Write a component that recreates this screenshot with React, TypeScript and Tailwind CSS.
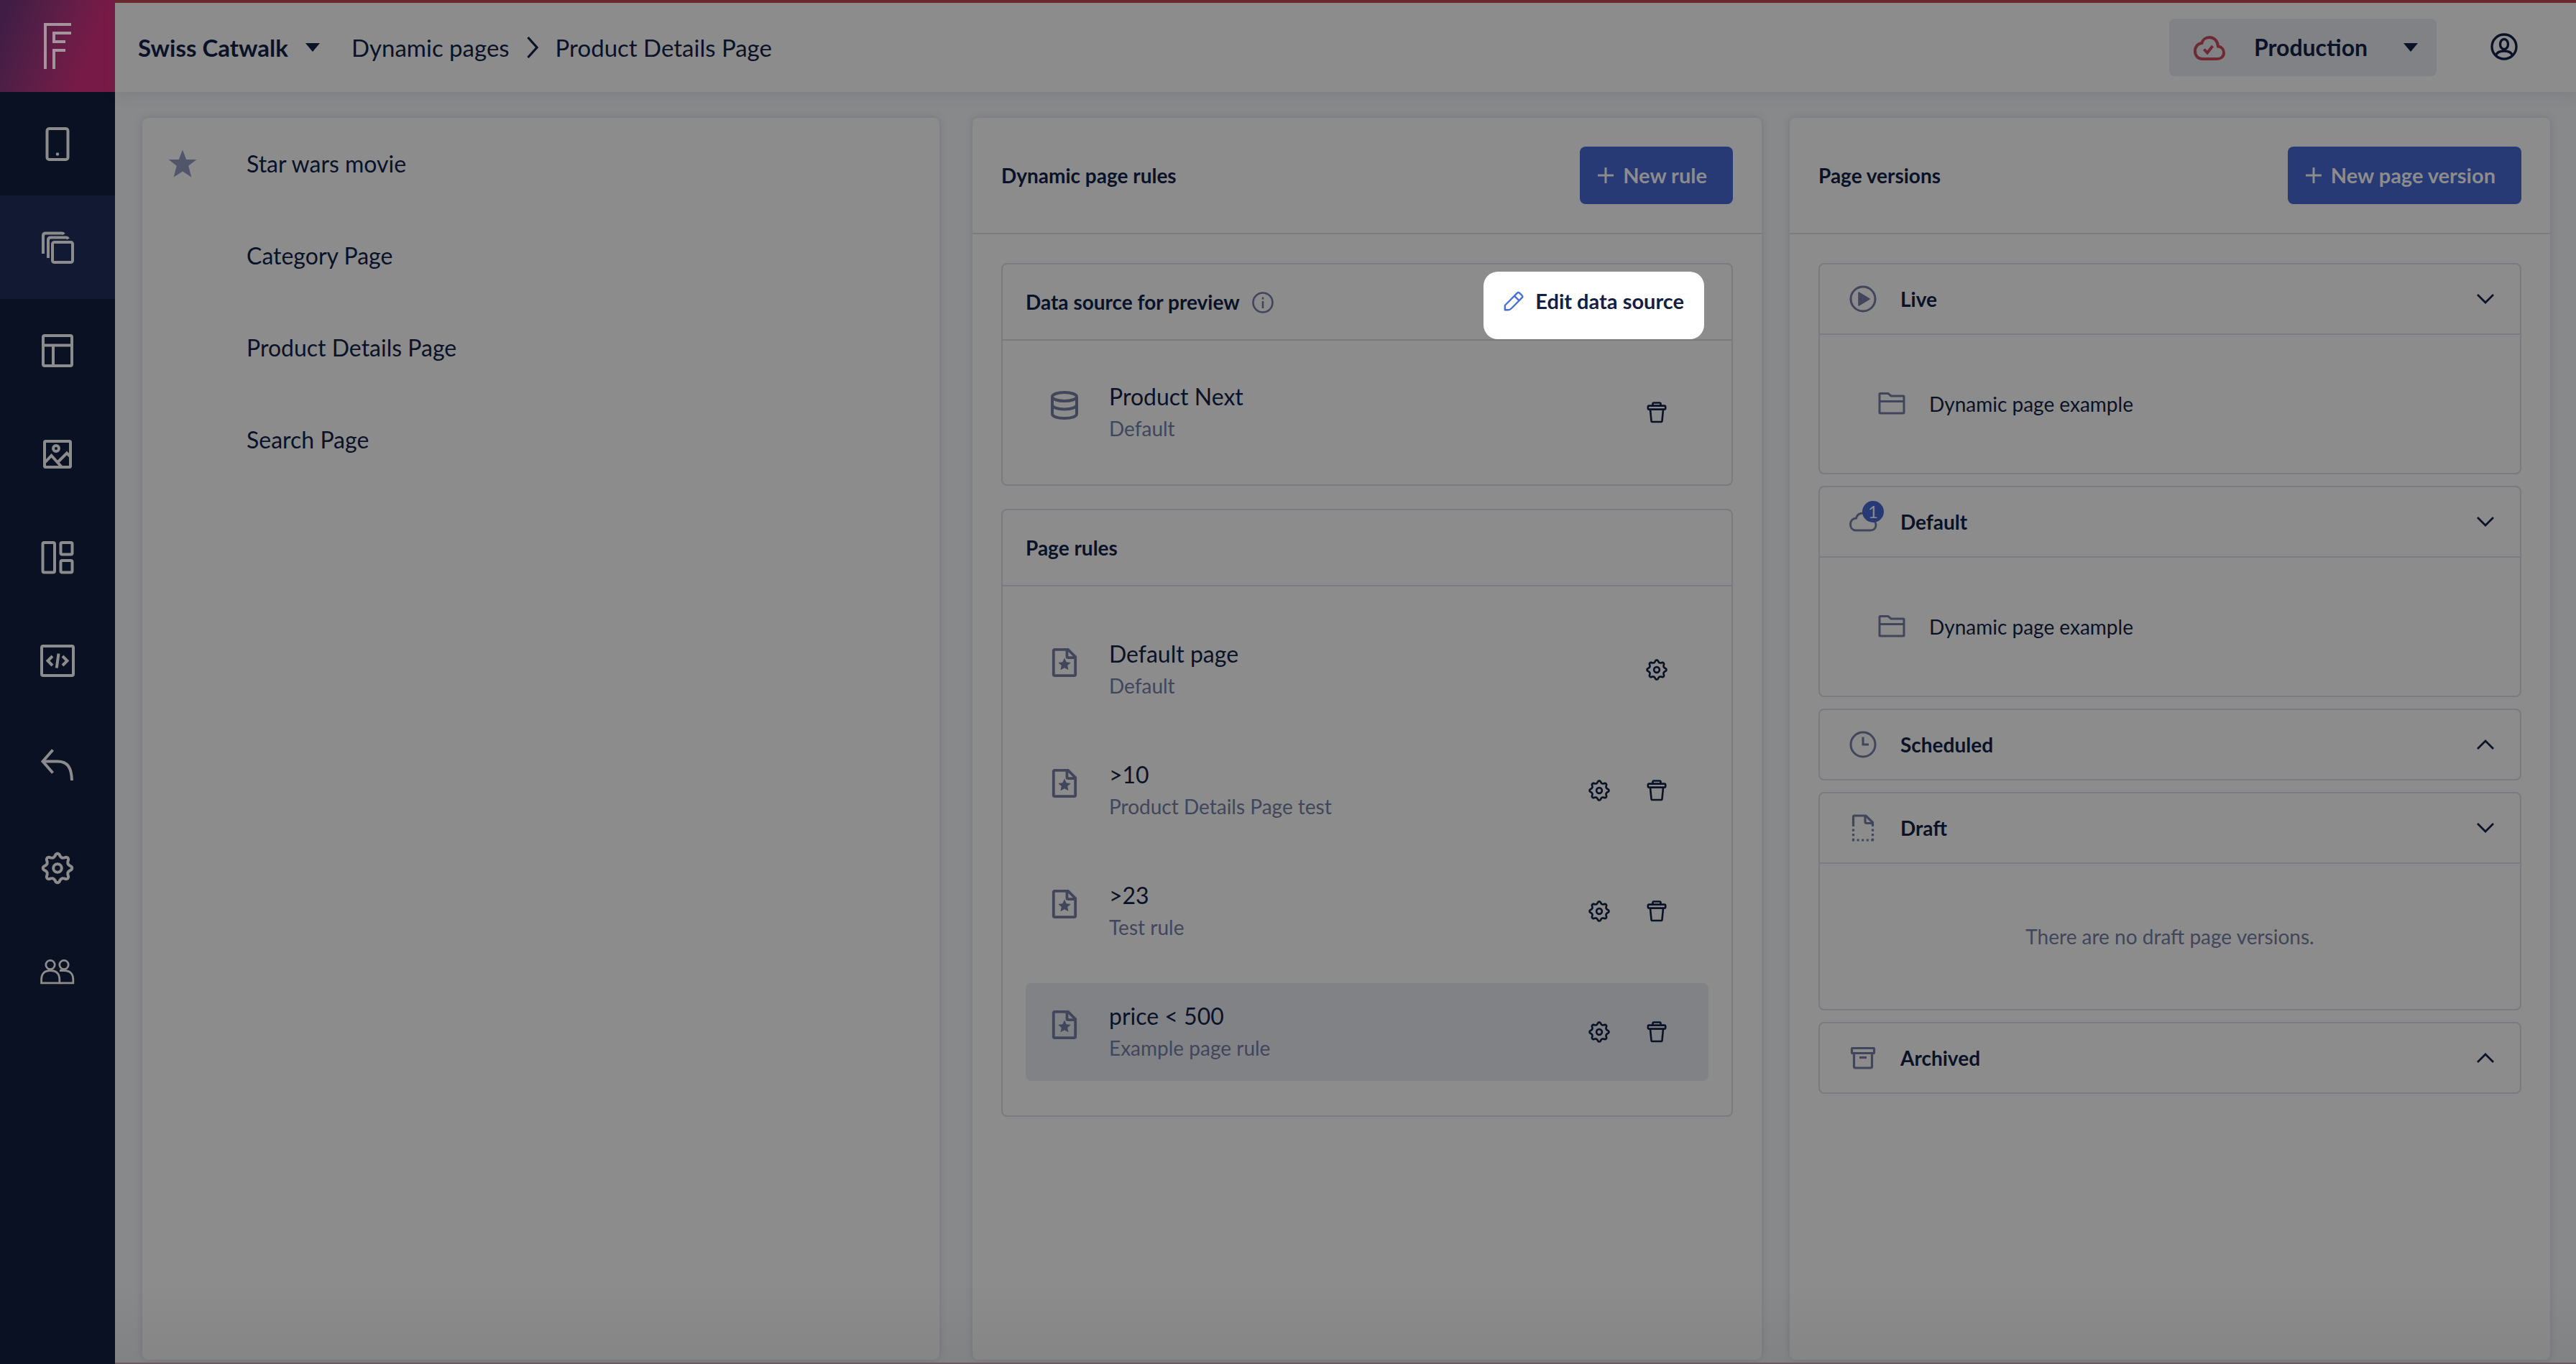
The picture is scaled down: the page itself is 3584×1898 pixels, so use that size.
import React from "react";

type IconProps = {
  className?: string;
};

type Rule = {
  title: string;
  subtitle: string;
  deletable: boolean;
  active?: boolean;
};

type Version = {
  title: string;
  icon: React.ReactNode;
  open: boolean;
  page?: string;
  empty?: string;
};

// eight rounded teeth around the centre of a 48 x 48 box
const gearPath =
  "M" +
  Array.from({ length: 128 }, (_, i) => {
    const angle = (i / 128) * Math.PI * 2;
    const wave = Math.cos(8 * angle);
    const radius = 17.4 + 2.8 * (wave > 0 ? Math.pow(wave, 0.7) : wave * 0.6);
    return `${(24 + radius * Math.cos(angle)).toFixed(2)} ${(24 + radius * Math.sin(angle)).toFixed(2)}`;
  }).join("L") +
  "Z";

const Svg = ({
  className = "size-12",
  box = 48,
  width = 4,
  children,
}: {
  className?: string;
  box?: number;
  width?: number;
  children: React.ReactNode;
}) => (
  <svg
    className={`${className} shrink-0`}
    viewBox={`0 0 ${box} ${box}`}
    fill="none"
    stroke="currentColor"
    strokeWidth={width}
    aria-hidden="true"
  >
    {children}
  </svg>
);

const Logo = () => (
  <svg className="w-10 h-16" viewBox="0 0 40 64" fill="none" stroke="#a5929d" strokeWidth="4" aria-hidden="true">
    <path d="M3 64V2H39" />
    <path d="M39 14H15V26H31" />
    <path d="M31 38H15V64" />
  </svg>
);

const PhoneIcon = () => (
  <Svg>
    <rect x="9.5" y="3" width="29" height="43" rx="3" />
    <circle cx="24" cy="38.5" r="2.2" fill="currentColor" stroke="none" />
  </Svg>
);

const PagesIcon = () => (
  <Svg>
    <rect x="17" y="17" width="28" height="28" rx="2.5" />
    <path d="M11 39V14Q11 10.500 14.500 10.500H36Q38 10.500 39 12.500" />
    <path d="M4 33V8Q4 4.500 7.500 4.500H30Q32 4.500 33 6" />
  </Svg>
);

const LayoutIcon = () => (
  <Svg>
    <rect x="4" y="3" width="40" height="42" rx="2" />
    <path d="M4 16.500H44M18 16.500V45" />
  </Svg>
);

const ImageIcon = () => (
  <Svg>
    <rect x="6" y="6" width="36" height="36" rx="1.5" />
    <circle cx="22" cy="16" r="4" />
    <path d="M7 35L15.5 26L30 42M24 35.500L37 22.500L42 27.500" />
  </Svg>
);

const WidgetsIcon = () => (
  <Svg>
    <rect x="3.5" y="3" width="16.5" height="41.5" rx="2" />
    <rect x="28.5" y="3" width="16" height="16.5" rx="2" />
    <rect x="28.5" y="28" width="16" height="16.5" rx="2" />
  </Svg>
);

const CodeIcon = () => (
  <Svg>
    <rect x="2" y="3" width="44" height="41" rx="2" />
    <path d="M17 17L10.500 23.500L17 30M31 17L37.500 23.500L31 30M25.500 13.500L22.800 33.500" />
  </Svg>
);

const BackIcon = () => (
  <Svg>
    <path d="M17.5 3.5L3.5 19.5L17.5 35.5" />
    <path d="M4 19.500H24C38 19.500 43.500 28 44 46" />
  </Svg>
);

const GearIcon = ({ className = "size-12" }: IconProps) => (
  <Svg className={className}>
    <path d={gearPath} strokeLinejoin="round" />
    <circle cx="24" cy="24" r="5.8" />
  </Svg>
);

const PeopleIcon = () => (
  <Svg width={2.8}>
    <circle cx="14" cy="14.5" r="6.2" />
    <circle cx="33" cy="14.5" r="6.2" />
    <path d="M1.6 39.800V35C1.600 27 6 22.500 14.200 22.500S26.800 27 26.800 35V39.800Z" />
    <path d="M27 22.500H33C41 22.500 45.800 27 45.800 35V39.800H26.800" />
  </Svg>
);

const Caret = () => (
  <svg className="w-5 h-3 shrink-0 pointer-events-none" viewBox="0 0 20 12" aria-hidden="true">
    <path d="M0 0H20L10 12Z" fill="currentColor" />
  </svg>
);

const CloudCheckIcon = () => (
  <svg className="w-11 h-9 shrink-0" viewBox="0 0 44 36" fill="none" stroke="#6e2932" strokeWidth="4" aria-hidden="true">
    <path d="M12 34H33C38 34 42 30.500 42 25.500C42 20.500 38.500 17 34 16.500C33.500 9 28.500 4 22 4C16.500 4 12.500 7.500 11.500 12C6 12.500 2 17 2 23C2 29.500 6 34 12 34Z" />
    <path d="M14.500 20.500L19 25.500L26.500 16" />
  </svg>
);

const UserIcon = () => (
  <Svg className="size-10" box={40} width={3.4}>
    <circle cx="20" cy="19" r="17" />
    <ellipse cx="20" cy="15.500" rx="5.500" ry="7" />
    <path d="M8.500 31C10 26.500 14.500 25 20 25S30 26.500 31.500 31" />
  </Svg>
);

const PlusIcon = () => (
  <Svg className="size-6" box={24} width={3}>
    <path d="M12 1V23M1 12H23" />
  </Svg>
);

const InfoIcon = () => (
  <Svg className="size-8 text-[#41465a]" box={32} width={2.6}>
    <circle cx="16" cy="17" r="13.500" />
    <path d="M16 15V25M16 9.500V12.500" />
  </Svg>
);

const PencilIcon = () => (
  <Svg className="size-7 text-[#4a6fdc]" box={28} width={2.4}>
    <path d="M1.800 26.200V20L19 2.600Q20.500 1.200 22 2.600L25.600 6.200Q27 7.700 25.600 9.200L10.500 24.500Q8.800 26.200 6.500 26.200Z" strokeLinejoin="round" />
    <path d="M15 6.800L21.500 13.200" />
  </Svg>
);

const TrashIcon = () => (
  <Svg className="size-8" box={32} width={2.6}>
    <path d="M10.500 6V4Q10.500 2.500 12 2.500H20Q21.500 2.500 21.500 4V6" />
    <rect x="3.800" y="6.600" width="24.400" height="5" rx="1.600" />
    <path d="M7 12L8.500 27.500Q8.700 29 10.200 29H21.800Q23.300 29 23.500 27.500L25 12" />
  </Svg>
);

const DatabaseIcon = () => (
  <Svg className="size-10" box={40} width={4}>
    <ellipse cx="20" cy="8" rx="17" ry="6" />
    <path d="M3 8V32C3 35.500 10 38 20 38S37 35.500 37 32V8" />
    <path d="M3 19C3 22.600 10 25.600 20 25.600S37 22.600 37 19" />
  </Svg>
);

const RuleIcon = () => (
  <Svg className="size-10" box={40} width={3.8}>
    <path d="M6.500 1.900H25L35.200 12V36.200Q35.200 38.100 33.500 38.100H6.500Q4.800 38.100 4.800 36.200V3.500Q4.800 1.900 6.500 1.900Z" />
    <path d="M23.500 2V11.500Q23.500 13.200 25.200 13.200H35" />
    <path
      d="M20 13.500L22.600 19.200L28.800 19.900L24.200 24.100L25.500 30.300L20 27.200L14.500 30.300L15.800 24.100L11.200 19.900L17.400 19.200Z"
      fill="currentColor"
      stroke="none"
    />
  </Svg>
);

const LiveIcon = () => (
  <Svg className="size-10" box={40} width={3}>
    <circle cx="20" cy="20" r="17" />
    <path d="M14 11L29 20L14 29Z" fill="currentColor" stroke="currentColor" strokeWidth="1.500" strokeLinejoin="round" />
  </Svg>
);

const DefaultIcon = () => (
  <div className="relative size-10 shrink-0">
    <Svg className="size-10" box={40} width={3}>
      <path d="M10 32H30C35 32 38 29 38 24.500C38 20 34.500 17.500 31 17C30 11.500 26 8 20.500 8C15 8 11.500 11 10.500 15C5.500 15.500 2.500 19 2.500 23.500C2.500 28.500 5.500 32 10 32Z" />
    </Svg>
    <span className="absolute left-[19px] -top-[9px] flex size-[30px] items-center justify-center rounded-full bg-[#273a75] text-2xl leading-none text-[#8c8c8c]">
      1
    </span>
  </div>
);

const ClockIcon = () => (
  <Svg className="size-10" box={40} width={3}>
    <circle cx="20" cy="20" r="17" />
    <path d="M20 9.500V20H28" />
  </Svg>
);

const DraftIcon = () => (
  <Svg className="size-10" box={40} width={3.2}>
    <path d="M6.500 18V4.500Q6.500 3 8 3H24L33.500 12.500V18" />
    <path d="M23 3V11.500Q23 13.500 25 13.500H33" />
    <path d="M6.500 21.500V38M33.500 21.500V38" strokeDasharray="3.200 3.400" />
    <path d="M5 37H35" strokeDasharray="3 3.600" />
  </Svg>
);

const ArchiveIcon = () => (
  <Svg className="size-10" box={40} width={3.2}>
    <rect x="4.500" y="6.500" width="31" height="7" rx="1" />
    <path d="M7.500 14V32Q7.500 34 9.500 34H30.500Q32.500 34 32.500 32V14" />
    <path d="M15 19.500H25" />
  </Svg>
);

const FolderIcon = () => (
  <Svg className="size-10" box={40} width={3}>
    <path d="M3 32V6.500Q3 5.500 4 5.500H15L19 9H36Q37 9 37 10V32Q37 33 36 33H4Q3 33 3 32Z" />
    <path d="M3 16.500H37" />
  </Svg>
);

const Chevron = ({ up = false }: { up?: boolean }) => (
  <Svg className="size-6" box={24} width={2.8}>
    <path d={up ? "M1 18L12 7L23 18" : "M1 6L12 17L23 6"} />
  </Svg>
);

const navItems = [
  { label: "Devices", icon: <PhoneIcon /> },
  { label: "Pages", icon: <PagesIcon />, active: true },
  { label: "Layouts", icon: <LayoutIcon /> },
  { label: "Media", icon: <ImageIcon /> },
  { label: "Components", icon: <WidgetsIcon /> },
  { label: "Developer", icon: <CodeIcon /> },
  { label: "Redirects", icon: <BackIcon /> },
  { label: "Settings", icon: <GearIcon /> },
  { label: "Users", icon: <PeopleIcon /> },
];

const pages = ["Star wars movie", "Category Page", "Product Details Page", "Search Page"];

const rules: Rule[] = [
  { title: "Default page", subtitle: "Default", deletable: false },
  { title: ">10", subtitle: "Product Details Page test", deletable: true },
  { title: ">23", subtitle: "Test rule", deletable: true },
  { title: "price < 500", subtitle: "Example page rule", deletable: true, active: true },
];

const versions: Version[] = [
  { title: "Live", icon: <LiveIcon />, open: true, page: "Dynamic page example" },
  { title: "Default", icon: <DefaultIcon />, open: true, page: "Dynamic page example" },
  { title: "Scheduled", icon: <ClockIcon />, open: false },
  { title: "Draft", icon: <DraftIcon />, open: true, empty: "There are no draft page versions." },
  { title: "Archived", icon: <ArchiveIcon />, open: false },
];

const Sidebar = () => (
  <aside className="w-40 shrink-0 bg-[#0a1122] text-[#8c8c8c]">
    <a
      href="#home"
      aria-label="Home"
      className="flex h-32 items-center justify-center bg-linear-110 from-[#3f1d45] from-5% to-[#781a47] to-75%"
    >
      <Logo />
    </a>
    <nav>
      {navItems.map((item) => (
        <a
          key={item.label}
          href={`#${item.label.toLowerCase()}`}
          aria-label={item.label}
          className={`flex h-36 items-center justify-center ${item.active ? "bg-[#121a33]" : ""}`}
        >
          {item.icon}
        </a>
      ))}
    </nav>
  </aside>
);

const Header = () => (
  <header className="flex h-32 items-center border-t-4 border-[#6b2831] bg-[#8c8c8c] pl-8 pr-20 text-[33px] leading-10 shadow-[0_4px_16px_rgba(60,64,74,0.15)]">
    <label className="flex items-center gap-6">
      <select aria-label="Project" className="appearance-none bg-transparent font-bold">
        <option>Swiss Catwalk</option>
      </select>
      <Caret />
    </label>
    <nav className="ml-11 flex items-center gap-6">
      <a href="#dynamic">Dynamic pages</a>
      <svg className="w-4 h-8" viewBox="0 0 16 32" fill="none" stroke="currentColor" strokeWidth="3.200" aria-hidden="true">
        <path d="M1.500 2L14 16L1.500 30" />
      </svg>
      <a href="#details">Product Details Page</a>
    </nav>
    <label className="ml-auto flex h-20 w-[372px] items-center rounded-lg bg-[#818286] pl-[34px] pr-[26px] text-[32px]">
      <CloudCheckIcon />
      <select aria-label="Environment" className="ml-10 flex-1 appearance-none bg-transparent font-bold">
        <option>Production</option>
      </select>
      <Caret />
    </label>
    <button aria-label="Account" className="ml-[74px]">
      <UserIcon />
    </button>
  </header>
);

const Card = ({ className = "", children }: { className?: string; children: React.ReactNode }) => (
  <section className={`rounded-lg bg-[#8c8c8c] shadow-[0_0_10px_rgba(70,76,98,0.3)] ${className}`}>{children}</section>
);

const CardHeader = ({ title, action }: { title: string; action: string }) => (
  <div className="flex h-[162px] items-center justify-between border-b-2 border-[#7c7c7d] px-10">
    <h2 className="font-bold">{title}</h2>
    <button className="flex h-20 items-center gap-3 rounded-lg bg-[#273a75] pl-6 pr-9 text-[29px] font-bold text-[#8c8c8c]">
      <PlusIcon />
      {action}
    </button>
  </div>
);

const RuleRow = ({ rule, icon, configurable = true }: { rule: Rule; icon: React.ReactNode; configurable?: boolean }) => (
  <li className={`flex h-[136px] items-center rounded-lg pl-[34px] pr-14 ${rule.active ? "bg-[#818286]" : ""}`}>
    <div className="mb-5 text-[#41465a]">{icon}</div>
    <div className="ml-[42px] flex-1 leading-11">
      <p className="text-[32px] leading-11">{rule.title}</p>
      <p className="text-[#41465a]">{rule.subtitle}</p>
    </div>
    <div className="flex gap-12">
      {configurable && (
        <button aria-label={`Configure ${rule.title}`}>
          <GearIcon className="size-8" />
        </button>
      )}
      {rule.deletable && (
        <button aria-label={`Delete ${rule.title}`}>
          <TrashIcon />
        </button>
      )}
    </div>
  </li>
);

const VersionPanel = ({ version }: { version: Version }) => (
  <div className="rounded-lg border-2 border-[#7a7a80]">
    <button className="flex h-24 w-full items-center pl-10 pr-9 text-left" aria-expanded={version.open}>
      <span className="text-[#41465a]">{version.icon}</span>
      <span className="ml-8 flex-1 font-bold">{version.title}</span>
      <Chevron up={!version.open} />
    </button>
    {version.page && (
      <a href="#version" className="flex h-[194px] items-center gap-8 border-t-2 border-[#7a7a80] pl-20">
        <span className="text-[#41465a]">
          <FolderIcon />
        </span>
        {version.page}
      </a>
    )}
    {version.empty && (
      <p className="flex h-[204px] items-center justify-center border-t-2 border-[#7a7a80] text-[#41465a]">
        {version.empty}
      </p>
    )}
  </div>
);

const PageList = () => (
  <Card className="flex-[1109]">
    <ul className="text-[32px]">
      {pages.map((page, i) => (
        <li key={page} className="flex h-32 items-center pl-9">
          <div className="w-[109px] text-[#51566a]">
            {i === 0 && (
              <svg className="size-10" viewBox="0 0 40 40" fill="currentColor" aria-hidden="true">
                <path d="M20 0.500L25.200 14H39.500L28.200 22.800L32.300 38.500L20 30.500L7.700 38.500L11.800 22.800L0.500 14H14.800Z" />
              </svg>
            )}
          </div>
          <a href="#page">{page}</a>
        </li>
      ))}
    </ul>
  </Card>
);

const DynamicRules = () => (
  <Card>
    <CardHeader title="Dynamic page rules" action="New rule" />
    <div className="flex flex-col gap-8 px-10 py-10">
      <div className="rounded-lg border-2 border-[#7a7a80]">
        <div className="flex h-[106px] items-center border-b-2 border-[#7a7a7b] pl-8 pr-[38px]">
          <h3 className="font-bold">Data source for preview</h3>
          <button aria-label="About data source" className="ml-4">
            <InfoIcon />
          </button>
          <button className="ml-auto flex h-[94px] items-center gap-4 self-end rounded-[20px] bg-white px-7 pb-3 text-[29px] font-bold text-[#132043]">
            <PencilIcon />
            Edit data source
          </button>
        </div>
        <ul className="p-8">
          <RuleRow
            rule={{ title: "Product Next", subtitle: "Default", deletable: true }}
            icon={<DatabaseIcon />}
            configurable={false}
          />
        </ul>
      </div>
      <div className="rounded-lg border-2 border-[#7a7a80]">
        <div className="flex h-[106px] items-center border-b-2 border-[#7a7a80] px-8">
          <h3 className="font-bold">Page rules</h3>
        </div>
        <ul className="flex flex-col gap-8 px-8 py-12">
          {rules.map((rule) => (
            <RuleRow key={rule.title} rule={rule} icon={<RuleIcon />} />
          ))}
        </ul>
      </div>
    </div>
  </Card>
);

const PageVersions = () => (
  <Card>
    <CardHeader title="Page versions" action="New page version" />
    <div className="flex flex-col gap-4 px-10 py-10">
      {versions.map((version) => (
        <VersionPanel key={version.title} version={version} />
      ))}
    </div>
  </Card>
);

export default function App() {
  return (
    <div className="flex min-h-screen bg-[#88898b] font-[Lato,sans-serif] text-[28px] leading-10 text-[#0a1228]">
      <Sidebar />
      <div className="relative flex min-w-0 flex-1 flex-col">
        <Header />
        <main className="flex flex-1 gap-[46px] pl-[38px] pr-9 pt-9 pb-[6px]">
          <PageList />
          <div className="grid flex-[2195] grid-cols-[1098fr_1058fr] gap-[39px]">
            <DynamicRules />
            <PageVersions />
          </div>
        </main>
        <div className="pointer-events-none absolute inset-x-0 bottom-0 h-28 border-b-2 border-[#6a5a62] bg-linear-to-b from-transparent to-black/5" />
      </div>
    </div>
  );
}
